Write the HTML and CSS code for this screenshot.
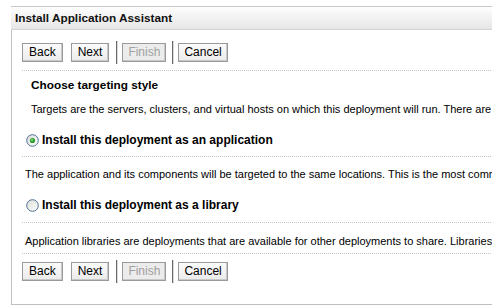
FILE: index.html
```html
<!DOCTYPE html>
<html>
<head>
<meta charset="utf-8">
<link rel="stylesheet" href="styles.css">
</head>
<body>
<div class="frame">
  <div class="header"><span class="title">Install Application Assistant</span></div>
  <div class="panel">
    <div class="toolbar">
      <button class="btn back">Back</button>
      <button class="btn next">Next</button>
      <span class="sep"></span>
      <button class="btn" disabled>Finish</button>
      <span class="sep"></span>
      <button class="btn cancel">Cancel</button>
    </div>
    <div class="rule r1"></div>
    <div class="heading">Choose targeting style</div>
    <div class="desc d1">Targets are the servers, clusters, and virtual hosts on which this deployment will run. There are several ways to target an application.</div>
    <label class="choice c1">
      <svg class="radio" width="13" height="13" viewBox="0 0 13 13">
        <defs>
          <linearGradient id="rg1" x1="0" y1="0" x2="1" y2="1">
            <stop offset="0" stop-color="#dcdcd6"/>
            <stop offset="1" stop-color="#ffffff"/>
          </linearGradient>
        </defs>
        <circle cx="6.5" cy="6.5" r="5.8" fill="url(#rg1)" stroke="#4a6f96" stroke-width="1"/>
        <circle cx="6.5" cy="6.5" r="2.6" fill="#2aa02a"/>
        <circle cx="6" cy="6" r="1" fill="#8fe08f"/>
      </svg>
      <span>Install this deployment as an application</span>
    </label>
    <div class="rule r2"></div>
    <div class="desc d2">The application and its components will be targeted to the same locations. This is the most common usage.</div>
    <label class="choice c2">
      <svg class="radio" width="13" height="13" viewBox="0 0 13 13">
        <defs>
          <linearGradient id="rg2" x1="0" y1="0" x2="1" y2="1">
            <stop offset="0" stop-color="#dcdcd6"/>
            <stop offset="1" stop-color="#ffffff"/>
          </linearGradient>
        </defs>
        <circle cx="6.5" cy="6.5" r="5.8" fill="url(#rg2)" stroke="#4a6f96" stroke-width="1"/>
      </svg>
      <span>Install this deployment as a library</span>
    </label>
    <div class="rule r3"></div>
    <div class="desc d3">Application libraries are deployments that are available for other deployments to share. Libraries should be available on all targets.</div>
    <div class="rule r4"></div>
    <div class="toolbar t2">
      <button class="btn back">Back</button>
      <button class="btn next">Next</button>
      <span class="sep"></span>
      <button class="btn" disabled>Finish</button>
      <span class="sep"></span>
      <button class="btn cancel">Cancel</button>
    </div>
  </div>
</div>
</body>
</html>
```
FILE: styles.css
```css
html, body {
  margin: 0;
  padding: 0;
  background: #ffffff;
  overflow: hidden;
}
body {
  font-family: "Liberation Sans", Arial, sans-serif;
  font-size: 11px;
  color: #000;
}
.frame {
  margin: 6px 0 0 11px;
  width: 900px;
}
.header {
  height: 22px;
  border-top: 1px solid #c3c8cd;
  border-bottom: 1px solid #d4d4d4;
  background: linear-gradient(#fefefe, #f4f4f4 40%, #e6e6e6);
  padding-left: 4px;
  line-height: 22px;
}
.title {
  font-weight: bold;
  font-size: 11.8px;
  color: #111;
}
.panel {
  border-left: 1px solid #c0c0c0;
  border-bottom: 1px solid #c0c0c0;
  padding: 11px 0 21px 10px;
}
.toolbar {
  display: flex;
  align-items: center;
  height: 23px;
}
.btn {
  font-family: "Liberation Sans", Arial, sans-serif;
  font-size: 12px;
  height: 19px;
  padding: 0 6px;
  margin: 0 8px 0 0;
  border: 1px solid;
  border-color: #ffffff #7f7f7f #7f7f7f #ffffff;
  box-shadow: inset -1px -1px 0 #c8c8c8;
  outline: 1px solid #9a9a9a;
  outline-offset: -1px;
  background: linear-gradient(#fbfbfb, #ebebeb);
  color: #000;
  line-height: 17px;
}
.btn.next { margin-right: 7px; }
.btn.cancel { padding: 0 5px; }
.btn[disabled] {
  color: #a0a0a0;
  background: #ececec;
  padding: 0 5px;
  margin-right: 6px;
}
.sep {
  width: 2px;
  height: 23px;
  background: linear-gradient(90deg, #6a6a6a 50%, #d8d8d8 50%);
  margin-right: 4px;
}
.rule {
  border-top: 1px dotted #c4c4c4;
}
.r1 { margin-top: 6px; }
.heading {
  font-weight: bold;
  font-size: 11.8px;
  line-height: 14px;
  margin: 7px 0 0 9px;
}
.desc {
  line-height: 14px;
  white-space: nowrap;
}
.d1 { margin: 10px 0 0 9px; }
.choice {
  display: flex;
  align-items: center;
  gap: 3px;
  height: 18px;
  font-weight: bold;
  font-size: 12px;
  margin-left: 4px;
}
.c1 { margin-top: 15px; }
.r2 { margin-top: 7px; }
.d2 { margin: 10px 0 0 3px; }
.c2 { margin-top: 15px; }
.r3 { margin-top: 8px; }
.d3 { margin: 11px 0 0 3px; }
.r4 { margin-top: 5px; }
.t2 { margin-top: 6px; }
```
